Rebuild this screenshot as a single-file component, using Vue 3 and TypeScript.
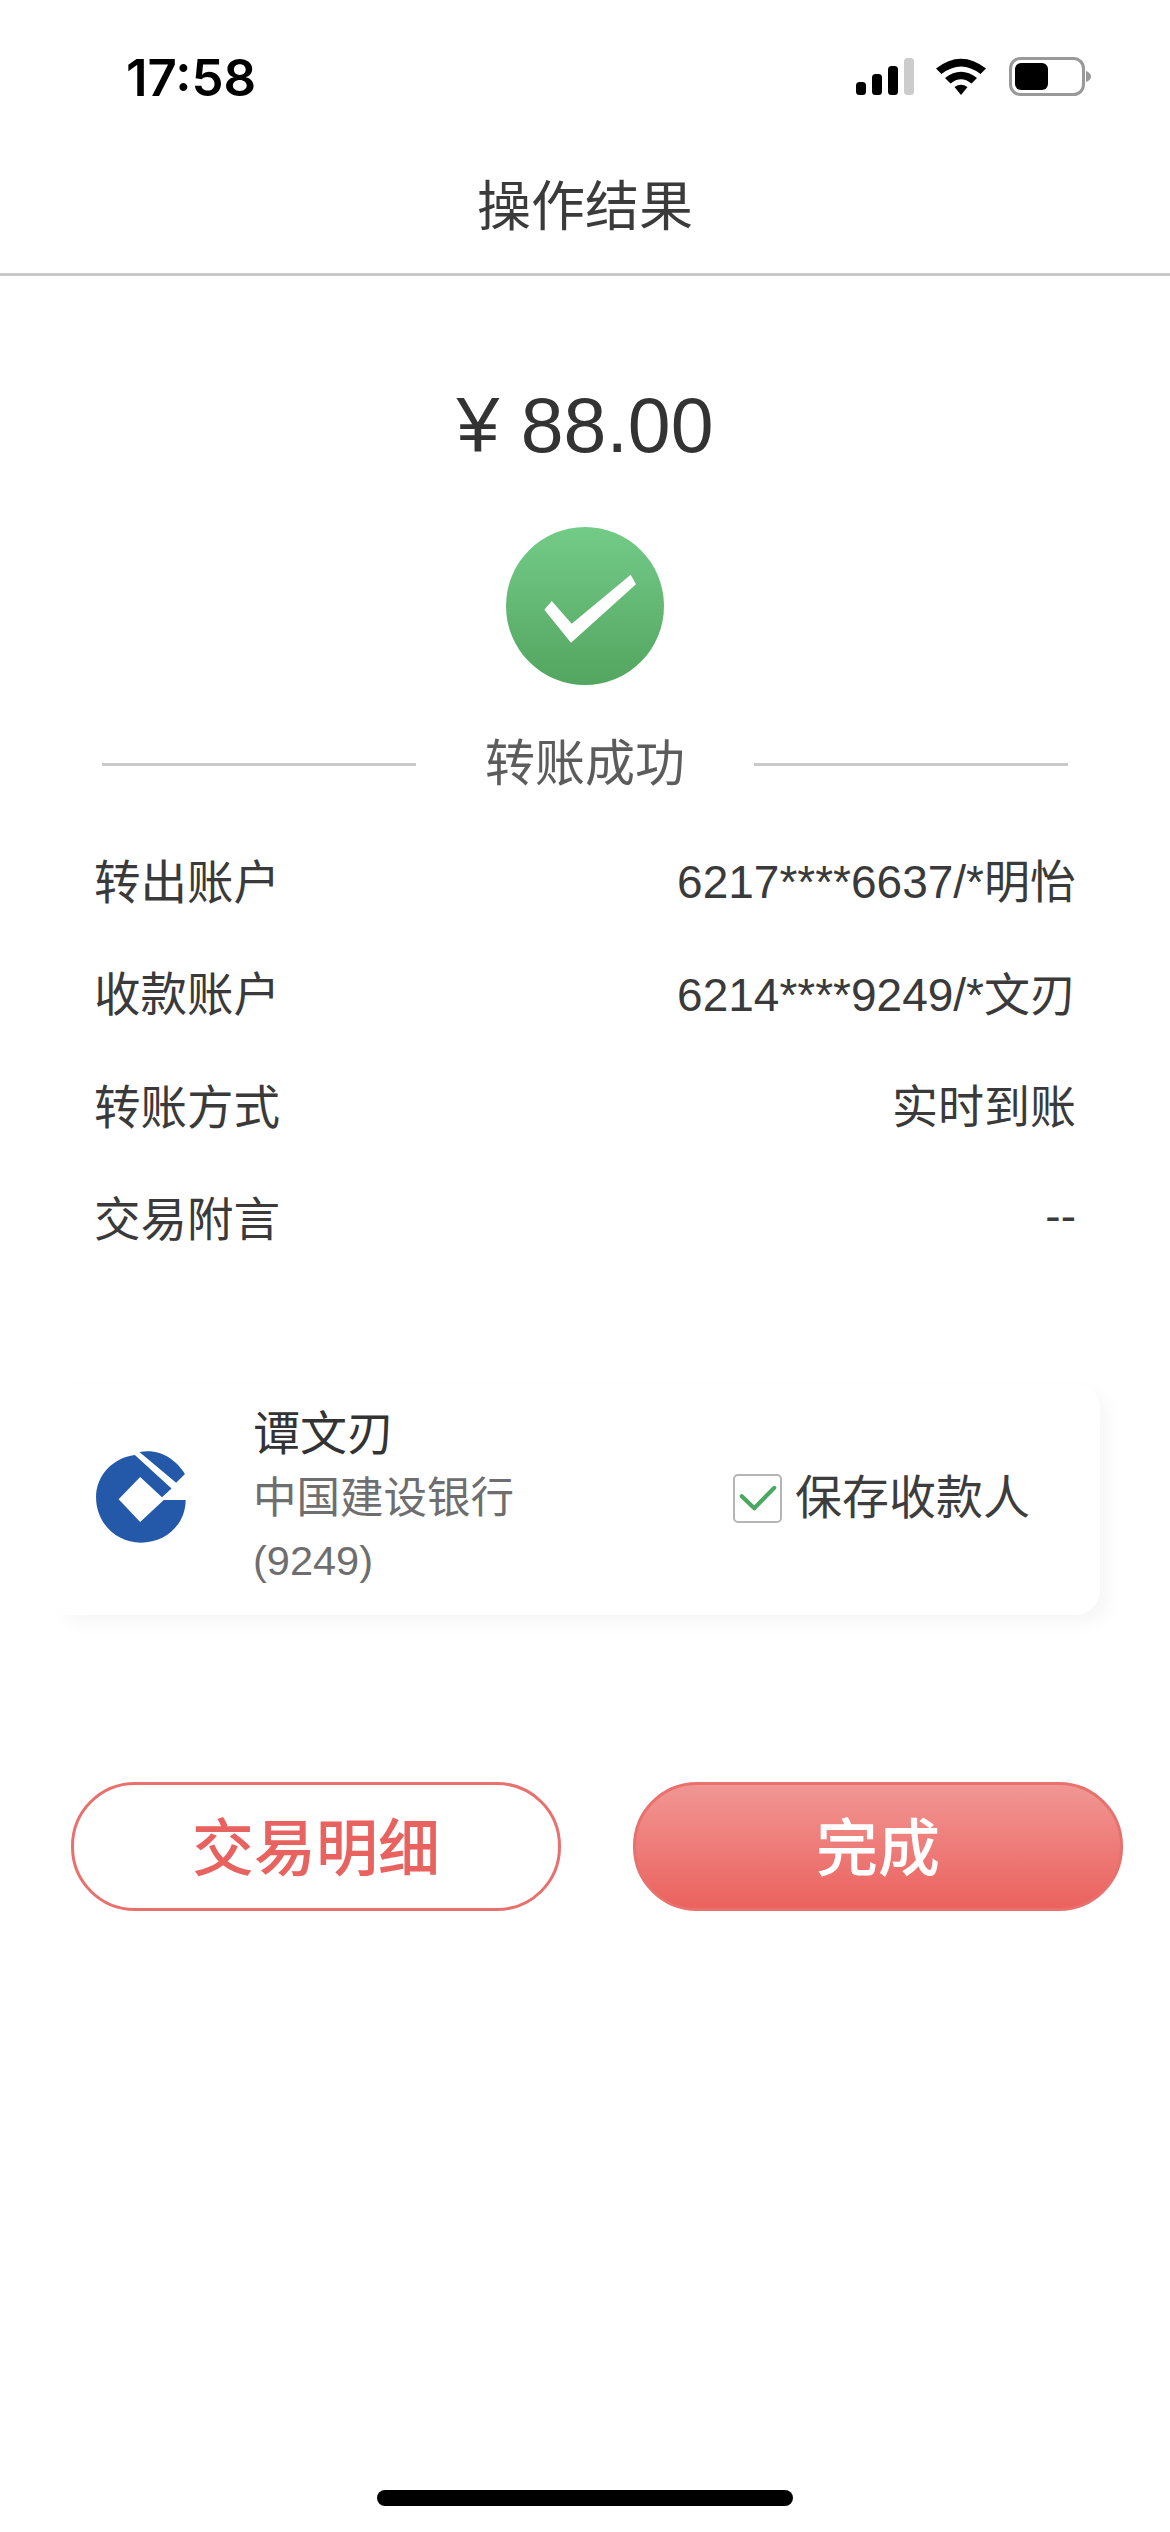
<script setup lang="ts">
const rows: { label: string; value: string }[] = [
  { label: '转出账户', value: '6217****6637/*明怡' },
  { label: '收款账户', value: '6214****9249/*文刃' },
  { label: '转账方式', value: '实时到账' },
  { label: '交易附言', value: '--' },
]
</script>

<template>
  <div class="page">
    <div class="status">
      <span class="time">17:58</span>
      <div class="status-icons">
        <svg class="signal" width="58" height="38" viewBox="0 0 58 38">
          <rect x="0" y="24" width="10" height="13" rx="3.5" fill="#000" />
          <rect x="16" y="16" width="10" height="21" rx="3.5" fill="#000" />
          <rect x="32" y="8" width="10" height="29" rx="3.5" fill="#000" />
          <rect x="48" y="0" width="10" height="37" rx="3.5" fill="#ccc" />
        </svg>
        <svg class="wifi" width="50" height="38" viewBox="0 0 50 38">
          <path d="M0 10.500Q25 -9 50 10.500L44.500 16Q25 1 5.500 16Z" fill="#000" />
          <path d="M9 20Q25 7.500 41 20L35.500 25.500Q25 17 14.500 25.500Z" fill="#000" />
          <path d="M18.500 29Q25 24.500 31.500 29L25 37Z" fill="#000" />
        </svg>
        <svg class="battery" width="83" height="40" viewBox="0 0 83 40">
          <rect x="1.500" y="1.500" width="73" height="36" rx="10" fill="none" stroke="#999" stroke-width="3" />
          <rect x="6" y="6" width="33" height="27" rx="6" fill="#000" />
          <path d="M77 14Q82 16 82 19.500Q82 23 77 25Z" fill="#999" />
        </svg>
      </div>
    </div>

    <header class="nav">操作结果</header>

    <main class="body">
      <div class="amount">¥ 88.00</div>
      <svg class="success" width="158" height="158" viewBox="0 0 158 158">
        <defs>
          <linearGradient id="okGrad" x1="0" y1="0" x2="0" y2="1">
            <stop offset="0" stop-color="#73cb88" />
            <stop offset="1" stop-color="#53a55f" />
          </linearGradient>
        </defs>
        <circle cx="79" cy="79" r="79" fill="url(#okGrad)" />
        <path d="M45.700 74L38.300 82.700L65 115.700L130 57.300L124.700 47.700L65.700 96.700Z" fill="#fff" />
      </svg>
      <div class="divider">
        <span class="line"></span>
        <span class="divider-text">转账成功</span>
        <span class="line"></span>
      </div>

      <div class="rows">
        <div v-for="row in rows" :key="row.label" class="row">
          <span>{{ row.label }}</span>
          <span class="row-value">{{ row.value }}</span>
        </div>
      </div>

      <section class="card">
        <svg class="logo" width="91" height="93" viewBox="155 268 258 283" preserveAspectRatio="none">
          <path
            d="M268 283L372 385L345 412L283 350L222 418L283 487L350 420L412 420C412 495 355 550 285 550C215 550 158 490 158 412C158 345 205 292 268 283Z"
            fill="#2359a8"
          />
          <path d="M281 274C340 262 385 298 410 341L385 368Z" fill="#2359a8" />
        </svg>
        <div class="payee">
          <div class="payee-name">谭文刃</div>
          <div class="payee-bank">中国建设银行</div>
          <div class="payee-no">(9249)</div>
        </div>
        <div class="save">
          <span class="check">
            <svg width="41" height="31" viewBox="0 0 41 31">
              <path d="M3 13L16.500 26L38 4" fill="none" stroke="#4aa862" stroke-width="4.500" stroke-linecap="round" stroke-linejoin="round" />
            </svg>
          </span>
          <span class="save-text">保存收款人</span>
        </div>
      </section>

      <div class="actions">
        <button class="btn ghost" type="button">交易明细</button>
        <button class="btn solid" type="button">完成</button>
      </div>
    </main>

    <div class="home"></div>
  </div>
</template>

<style>
html, body {
  margin: 0;
  background: #fff;
}
</style>

<style scoped>
.page {
  width: 1170px;
  height: 2532px;
  display: flex;
  flex-direction: column;
  background: #fff;
  font-family: "Liberation Sans", "Noto Sans CJK SC", sans-serif;
  color: #333;
  overflow: hidden;
}
.status {
  height: 135px;
  box-sizing: border-box;
  padding: 52px 78px 0 126px;
  display: flex;
  justify-content: space-between;
  align-items: flex-start;
}
.time {
  font-family: Inter, sans-serif;
  font-weight: 600;
  font-size: 51px;
  line-height: 52px;
  color: #000;
}
.status-icons {
  display: flex;
  align-items: flex-start;
  padding-top: 6px;
}
.wifi {
  margin-left: 22px;
}
.battery {
  margin-left: 23px;
  margin-top: -1px;
}
.nav {
  height: 141px;
  box-sizing: border-box;
  border-bottom: 3px solid #c8c8c8;
  display: flex;
  align-items: center;
  justify-content: center;
  font-size: 54px;
  color: #3b3b3b;
  padding-bottom: 3px;
}
.body {
  flex: 1;
  display: flex;
  flex-direction: column;
  align-items: center;
}
.amount {
  margin-top: 99px;
  font-size: 77px;
  line-height: 100px;
  color: #333;
}
.success {
  margin-top: 52px;
  display: block;
}
.divider {
  margin-top: 43px;
  width: 966px;
  display: flex;
  align-items: center;
  justify-content: space-between;
}
.line {
  width: 314px;
  height: 3px;
  background: #c9c9c9;
}
.divider-text {
  font-size: 50px;
  line-height: 72px;
  color: #5c5c5c;
}
.rows {
  margin-top: 22px;
  width: 982px;
  display: flex;
  flex-direction: column;
}
.row {
  height: 112.500px;
  display: flex;
  align-items: center;
  justify-content: space-between;
  font-size: 46.500px;
  color: #3a3a3a;
}
.row-value {
  font-size: 46px;
}
.card {
  margin-top: 112px;
  width: 1040px;
  height: 231px;
  box-sizing: border-box;
  margin-right: 10px;
  padding: 0 70px 6px 35px;
  border-radius: 0 24px 24px 0;
  box-shadow: 8px 8px 18px rgba(0, 0, 0, 0.04);
  display: flex;
  align-items: center;
  background: #fff;
}
.logo {
  flex: none;
  display: block;
}
.payee {
  margin-left: 67px;
  flex: 1;
  display: flex;
  flex-direction: column;
}
.payee-name {
  font-size: 47px;
  line-height: 64px;
  color: #333;
}
.payee-bank {
  font-size: 43.500px;
  line-height: 64px;
  color: #6e6e6e;
}
.payee-no {
  font-size: 41.500px;
  line-height: 62px;
  color: #6e6e6e;
}
.save {
  display: flex;
  align-items: center;
  gap: 13px;
  margin-top: 3px;
}
.check {
  width: 49px;
  height: 49px;
  box-sizing: border-box;
  border: 2px solid #b5b5b5;
  border-radius: 5px;
  display: flex;
  align-items: center;
  justify-content: center;
}
.check svg {
  display: block;
  width: 38px;
  height: 29px;
}
.save-text {
  font-size: 47px;
  line-height: 60px;
  color: #3d3d3d;
}
.actions {
  margin-top: 167px;
  width: 1052px;
  margin-left: 24px;
  display: flex;
  justify-content: space-between;
}
.btn {
  width: 490px;
  height: 129px;
  box-sizing: border-box;
  border-radius: 64px;
  border: 3px solid #e8706d;
  font-family: "Noto Sans CJK SC", sans-serif;
  font-size: 62px;
  font-weight: 500;
  padding: 0 0 6px;
}
.ghost {
  background: #fff;
  color: #e8625f;
}
.solid {
  background: linear-gradient(180deg, #f19693, #eb625e);
  color: #fff;
}
.home {
  height: 16px;
  width: 416px;
  border-radius: 8px;
  background: #000;
  align-self: center;
  margin-bottom: 26px;
}
</style>
